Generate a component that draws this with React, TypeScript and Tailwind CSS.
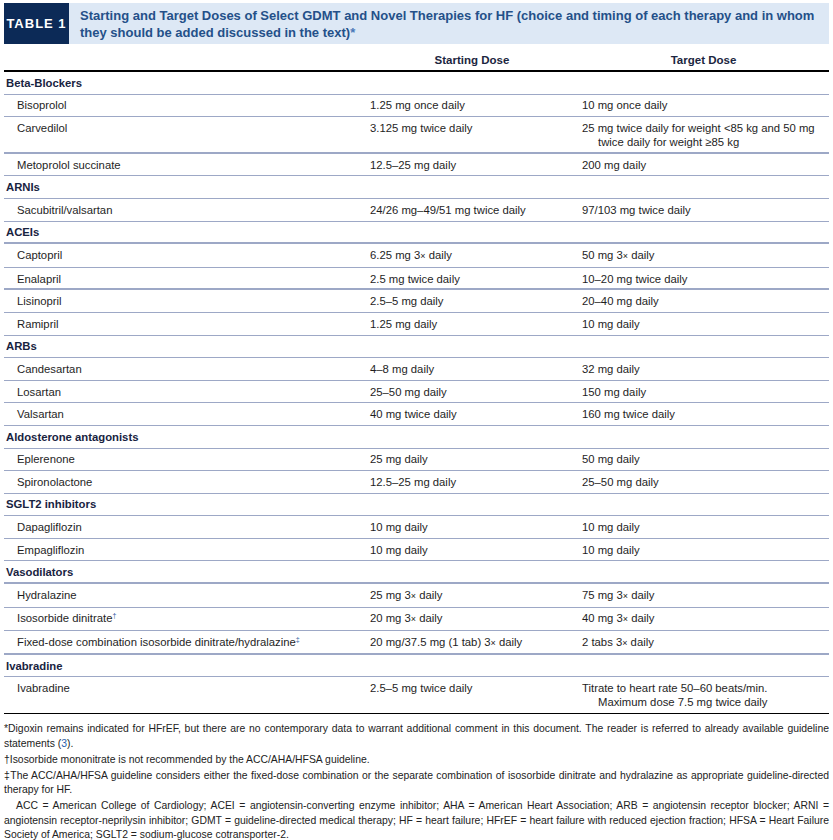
import React from 'react';

type Row =
  | { kind: 'cat'; label: string; thick?: boolean }
  | { kind: 'drug'; name: React.ReactNode; start: React.ReactNode; target: React.ReactNode; thick?: boolean };

const x = <span className="text-[9px]">×</span>;
const mark = (m: string) => <span className="relative -top-[4px] text-[7px] leading-none text-[#2a5aa0]">{m}</span>;

const rows: Row[] = [
  { kind: 'cat', label: 'Beta-Blockers' },
  { kind: 'drug', name: 'Bisoprolol', start: '1.25 mg once daily', target: '10 mg once daily' },
  {
    kind: 'drug',
    name: 'Carvedilol',
    start: '3.125 mg twice daily',
    target: <>25 mg twice daily for weight &lt;85 kg and 50 mg<br />twice daily for weight ≥85 kg</>,
    thick: true,
  },
  { kind: 'drug', name: 'Metoprolol succinate', start: '12.5–25 mg daily', target: '200 mg daily' },
  { kind: 'cat', label: 'ARNIs' },
  { kind: 'drug', name: 'Sacubitril/valsartan', start: '24/26 mg–49/51 mg twice daily', target: '97/103 mg twice daily' },
  { kind: 'cat', label: 'ACEIs', thick: true },
  { kind: 'drug', name: 'Captopril', start: <>6.25 mg 3{x} daily</>, target: <>50 mg 3{x} daily</> },
  { kind: 'drug', name: 'Enalapril', start: '2.5 mg twice daily', target: '10–20 mg twice daily', thick: true },
  { kind: 'drug', name: 'Lisinopril', start: '2.5–5 mg daily', target: '20–40 mg daily' },
  { kind: 'drug', name: 'Ramipril', start: '1.25 mg daily', target: '10 mg daily' },
  { kind: 'cat', label: 'ARBs' },
  { kind: 'drug', name: 'Candesartan', start: '4–8 mg daily', target: '32 mg daily' },
  { kind: 'drug', name: 'Losartan', start: '25–50 mg daily', target: '150 mg daily' },
  { kind: 'drug', name: 'Valsartan', start: '40 mg twice daily', target: '160 mg twice daily' },
  { kind: 'cat', label: 'Aldosterone antagonists' },
  { kind: 'drug', name: 'Eplerenone', start: '25 mg daily', target: '50 mg daily' },
  { kind: 'drug', name: 'Spironolactone', start: '12.5–25 mg daily', target: '25–50 mg daily' },
  { kind: 'cat', label: 'SGLT2 inhibitors' },
  { kind: 'drug', name: 'Dapagliflozin', start: '10 mg daily', target: '10 mg daily' },
  { kind: 'drug', name: 'Empagliflozin', start: '10 mg daily', target: '10 mg daily' },
  { kind: 'cat', label: 'Vasodilators', thick: true },
  { kind: 'drug', name: 'Hydralazine', start: <>25 mg 3{x} daily</>, target: <>75 mg 3{x} daily</> },
  { kind: 'drug', name: <>Isosorbide dinitrate{mark('†')}</>, start: <>20 mg 3{x} daily</>, target: <>40 mg 3{x} daily</> },
  {
    kind: 'drug',
    name: <>Fixed-dose combination isosorbide dinitrate/hydralazine{mark('‡')}</>,
    start: <>20 mg/37.5 mg (1 tab) 3{x} daily</>,
    target: <>2 tabs 3{x} daily</>,
    thick: true,
  },
  { kind: 'cat', label: 'Ivabradine' },
  {
    kind: 'drug',
    name: 'Ivabradine',
    start: '2.5–5 mg twice daily',
    target: <>Titrate to heart rate 50–60 beats/min.<br />Maximum dose 7.5 mg twice daily</>,
  },
];

export default function App() {
  return (
    <div className="bg-white w-[833px] min-h-[840px] px-1 pt-[3px] text-[#1e1e1e]" style={{ fontFamily: '"Liberation Sans", Arial, sans-serif' }}>
      <div className="flex">
        <div className="w-[65px] h-[41px] bg-[#0c2a57] flex items-center justify-center">
          <span className="text-white font-black text-[13px] tracking-[1px]">TABLE 1</span>
        </div>
        <div className="flex-1 bg-[#dde8f5] pl-[11px] pt-[4px] text-[13px] leading-[17px] font-bold text-[#245089]">
          Starting and Target Doses of Select GDMT and Novel Therapies for HF (choice and timing of each therapy and in whom they should be added discussed in the text)
          <span className="text-[#4a78b8]">*</span>
        </div>
      </div>

      <div className="grid grid-cols-[362px_212px_1fr] mt-[4px] border-b-2 border-black text-[11.5px] font-bold text-[#1b2640] leading-[14px] pt-[5px] pb-[3px]">
        <div />
        <div className="text-center">Starting Dose</div>
        <div className="text-center">Target Dose</div>
      </div>

      <div className="text-[11.3px] leading-[14px] border-b-[1.5px] border-black">
        {rows.map((r, i) => {
          const line = r.thick ? 'border-b-2 pb-[2.8px]' : 'border-b pb-[3.8px]';
          const last = i === rows.length - 1;
          if (r.kind === 'cat') {
            return (
              <div key={i} className={`${line} border-[#9da8c6] pt-[3.8px] pl-[2px] font-bold text-[#18233f]`}>
                {r.label}
              </div>
            );
          }
          return (
            <div
              key={i}
              className={`grid grid-cols-[362px_212px_1fr] pt-[3.8px] ${last ? 'pb-[3.8px]' : `${line} border-[#9da8c6]`}`}
            >
              <div className="pl-[13px]">{r.name}</div>
              <div className="pl-[4px]">{r.start}</div>
              <div className="pl-[20px] -indent-4">{r.target}</div>
            </div>
          );
        })}
      </div>

      <div className="mt-[8px] text-[10.4px] leading-[14.5px] text-[#222] text-justify space-y-[1.5px]">
        <p>
          *Digoxin remains indicated for HFrEF, but there are no contemporary data to warrant additional comment in this document. The reader is referred to already available guideline statements (<span className="text-[#2a62b0]">3</span>).
        </p>
        <p>†Isosorbide mononitrate is not recommended by the ACC/AHA/HFSA guideline.</p>
        <p>
          ‡The ACC/AHA/HFSA guideline considers either the fixed-dose combination or the separate combination of isosorbide dinitrate and hydralazine as appropriate guideline-directed therapy for HF.
        </p>
        <p className="indent-[12px]">
          ACC = American College of Cardiology; ACEI = angiotensin-converting enzyme inhibitor; AHA = American Heart Association; ARB = angiotensin receptor blocker; ARNI = angiotensin receptor-neprilysin inhibitor; GDMT = guideline-directed medical therapy; HF = heart failure; HFrEF = heart failure with reduced ejection fraction; HFSA = Heart Failure Society of America; SGLT2 = sodium-glucose cotransporter-2.
        </p>
      </div>
    </div>
  );
}
